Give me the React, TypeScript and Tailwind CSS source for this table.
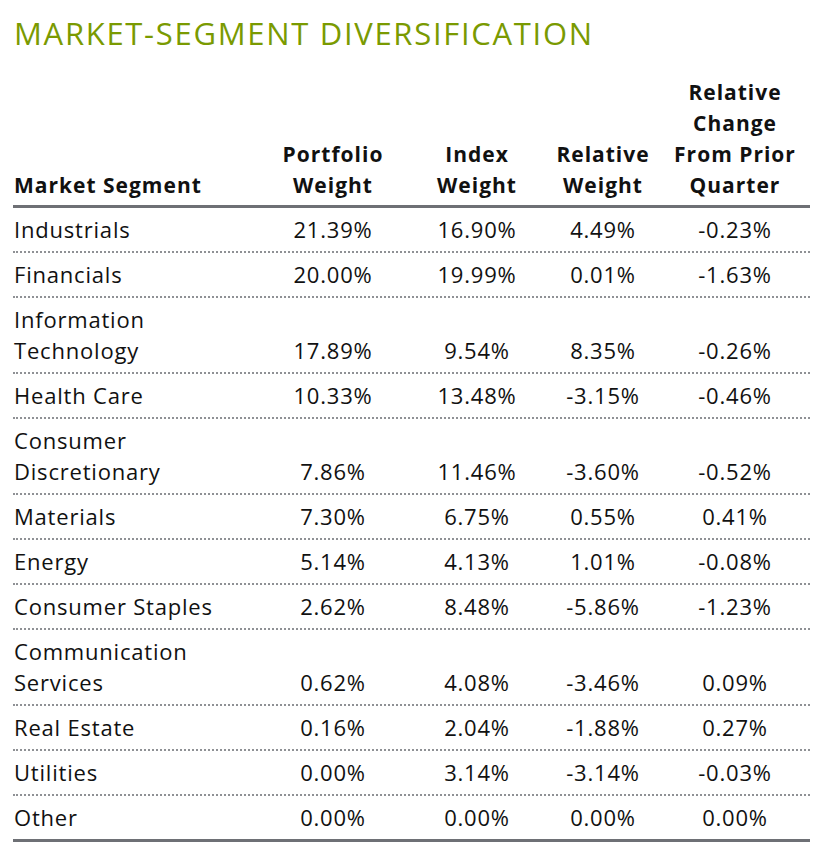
const rows: Array<[string[], string, string, string, string]> = [
  [["Industrials"], "21.39%", "16.90%", "4.49%", "-0.23%"],
  [["Financials"], "20.00%", "19.99%", "0.01%", "-1.63%"],
  [["Information", "Technology"], "17.89%", "9.54%", "8.35%", "-0.26%"],
  [["Health Care"], "10.33%", "13.48%", "-3.15%", "-0.46%"],
  [["Consumer", "Discretionary"], "7.86%", "11.46%", "-3.60%", "-0.52%"],
  [["Materials"], "7.30%", "6.75%", "0.55%", "0.41%"],
  [["Energy"], "5.14%", "4.13%", "1.01%", "-0.08%"],
  [["Consumer Staples"], "2.62%", "8.48%", "-5.86%", "-1.23%"],
  [["Communication", "Services"], "0.62%", "4.08%", "-3.46%", "0.09%"],
  [["Real Estate"], "0.16%", "2.04%", "-1.88%", "0.27%"],
  [["Utilities"], "0.00%", "3.14%", "-3.14%", "-0.03%"],
  [["Other"], "0.00%", "0.00%", "0.00%", "0.00%"],
];

const cols = "grid grid-cols-[245px_150px_138px_114px_150px]";

export default function App() {
  return (
    <div className="w-[827px] h-[847px] bg-white text-[#111] font-['Open_Sans',sans-serif] pl-[13px] pt-[13px]">
      <h1 className="text-[31px] leading-[40px] font-normal tracking-[1.7px] text-[#7a9a01] ml-[1px]">
        MARKET-SEGMENT DIVERSIFICATION
      </h1>
      <div className="w-[797px] mt-[24px]">
        {/* header */}
        <div className={`${cols} items-end border-b-[3px] border-[#6e7075] pb-[4px] text-[21px] leading-[31px] font-bold tracking-[1px]`}>
          <div className="pl-[1px]">Market Segment</div>
          <div className="text-center">Portfolio<br />Weight</div>
          <div className="text-center">Index<br />Weight</div>
          <div className="text-center">Relative<br />Weight</div>
          <div className="text-center">Relative<br />Change<br />From Prior<br />Quarter</div>
        </div>
        {rows.map(([name, pw, iw, rw, rc], i) => (
          <div
            key={name.join(" ")}
            className={`${cols} items-end py-[6px] text-[22px] leading-[31px] tracking-[0.8px] ${
              i === rows.length - 1
                ? "border-b-[3px] border-solid border-[#6e7075]"
                : "border-b-2 border-dotted border-[#8f9195]"
            }`}
          >
            <div className="pl-[1px]">
              {name.map((n) => (
                <div key={n}>{n}</div>
              ))}
            </div>
            <div className="text-center">{pw}</div>
            <div className="text-center">{iw}</div>
            <div className="text-center">{rw}</div>
            <div className="text-center">{rc}</div>
          </div>
        ))}
      </div>
    </div>
  );
}
